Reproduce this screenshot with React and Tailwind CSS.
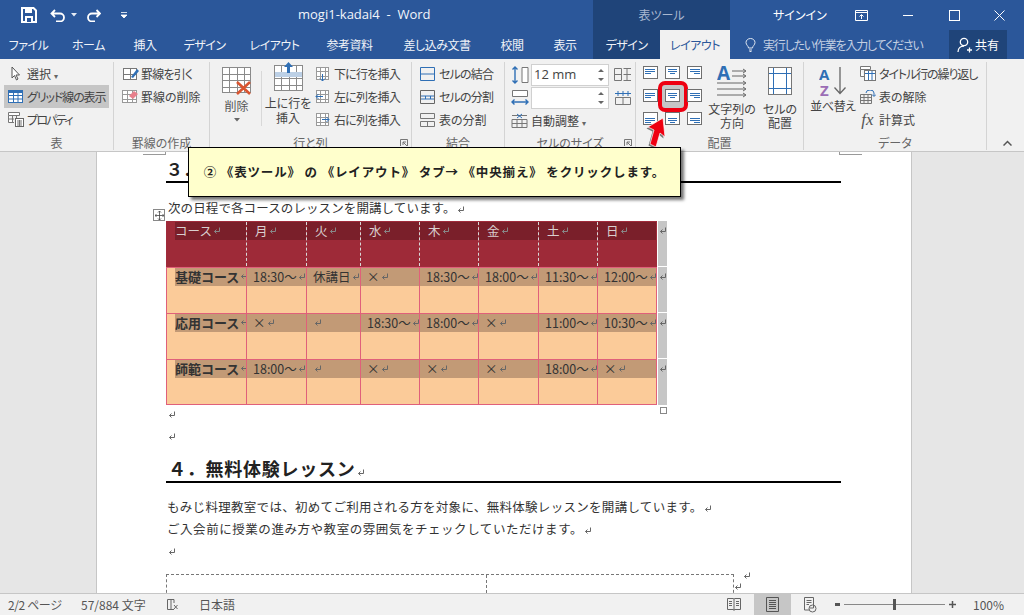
import React from "react";

const Ret = ({ c = "#666" }) => (
  <svg width="8" height="8" viewBox="0 0 8 8" className="inline-block shrink-0 align-[-1px] ml-px">
    <path d="M6.5 0.5V4.5H1.5M3.5 2.5L1.5 4.5L3.5 6.5" fill="none" stroke={c} strokeWidth="1" />
  </svg>
);

const Grid = ({ w = 16, h = 14, cols = 3, rows = 3, stroke = "#777", fill = "#fff", children }) => {
  const l = [];
  for (let i = 1; i < cols; i++) {
    const x = Math.round((w * i) / cols) + 0.5;
    l.push(<path key={"c" + i} d={`M${x} 0.5V${h - 0.5}`} stroke={stroke} />);
  }
  for (let i = 1; i < rows; i++) {
    const y = Math.round((h * i) / rows) + 0.5;
    l.push(<path key={"r" + i} d={`M0.5 ${y}H${w - 0.5}`} stroke={stroke} />);
  }
  return (
    <svg width={w} height={h} viewBox={`0 0 ${w} ${h}`} className="shrink-0 overflow-visible">
      <rect x="0.5" y="0.5" width={w - 1} height={h - 1} fill={fill} stroke={stroke} />
      {l}
      {children}
    </svg>
  );
};

const Row = ({ icon, text, active, x = "" }) => (
  <div className={`flex h-[23px] items-center gap-[3px] pl-[3px] whitespace-nowrap ${active ? "bg-[#c6c6c6]" : ""} ${x}`}>
    <span className="flex w-[17px] justify-center">{icon}</span>
    <span>{text}</span>
  </div>
);

const Group = ({ w, label, children, launcher, noBorder }) => (
  <div className={`relative flex h-full shrink-0 flex-col ${noBorder ? "" : "border-r border-[#d4d4d4]"}`} style={{ width: w }}>
    <div className="flex min-h-0 flex-1">{children}</div>
    <div className="h-[15px] text-center text-[12px] leading-[15px] text-[#666]">{label}</div>
    {launcher && (
      <svg width="8" height="8" viewBox="0 0 8 8" className="absolute bottom-[3px] right-[3px]">
        <path d="M0.5 7V0.5H7.5V7M7 7L3 3M3 6V3H6" fill="none" stroke="#777" />
      </svg>
    )}
  </div>
);

const Align = ({ h, v }) => {
  const ys = v === "t" ? [3, 5, 7] : v === "c" ? [4, 6, 8] : [6, 8, 10];
  const ln = h === "l" ? [[2, 12], [2, 12], [2, 8]] : h === "c" ? [[3, 12], [3, 12], [5, 10]] : [[3, 13], [3, 13], [7, 13]];
  return (
    <svg width="15" height="13" viewBox="0 0 15 13">
      <rect x="0.5" y="0.5" width="14" height="12" fill="#fff" stroke="#6f6f6f" />
      {ys.map((y, i) => (
        <path key={i} d={`M${ln[i][0]} ${y + 0.5}H${ln[i][1]}`} stroke="#2f6fb5" />
      ))}
    </svg>
  );
};

const AlignCell = ({ h, v, hot }) => (
  <div className="relative flex h-[23px] w-[22px] items-center justify-center">
    {hot && <div className="absolute left-[-3px] top-[-3px] h-[31px] w-[30px] rounded-[7px] border-[4px] border-[#ee0011] bg-[#c6c6c6]" />}
    <span className="relative flex"><Align h={h} v={v} /></span>
  </div>
);

const MmInput = ({ value }) => (
  <div className="flex h-[22px] w-[78px] items-center justify-between border border-[#d0d0d0] bg-white pl-[2px] pr-1 text-[13px] leading-none text-[#444]">
    <span className="font-['Open_Sans',sans-serif]">{value}</span>
    <svg width="6" height="16" viewBox="0 0 6 16"><path d="M0 5L3 2L6 5ZM0 11L3 14L6 11Z" fill="#666" /></svg>
  </div>
);

const cols = [80, 60, 54, 59, 59, 60, 59, 60];
const header = ["コース", "月", "火", "水", "木", "金", "土", "日"];
const rows = [
  ["基礎コース", "18:30～", "休講日", "×", "18:30～", "18:00～", "11:30～", "12:00～"],
  ["応用コース", "×", "", "18:30～", "18:00～", "×", "11:00～", "10:30～"],
  ["師範コース", "18:00～", "", "×", "×", "×", "18:00～", "×"],
];

const Tab = ({ children, x = "" }) => (
  <div className={`flex h-full items-center justify-center whitespace-nowrap text-[12px] tracking-[-0.5px] ${x}`}>{children}</div>
);

const RowEnd = ({ last }) => (
  <div className={`ml-px flex h-full w-[9px] items-start justify-center bg-[#c6c6c6] pt-[6px] ${last ? "" : "border-b border-white"}`}>
    <Ret />
  </div>
);

export default function App() {
  return (
    <div className="relative flex h-[615px] w-[1024px] flex-col overflow-hidden bg-[#e6e6e6] font-['Noto_Sans_CJK_JP','Noto_Sans',sans-serif] text-[12px] text-[#444]">
      {/* title bar */}
      <div className="relative flex h-[30px] shrink-0 items-center bg-[#2b579a] text-white [font-feature-settings:'palt']">
        <svg width="16" height="16" viewBox="0 0 16 16" className="ml-[21px]">
          <path d="M1 1H12.5L15 3.5V15H1Z" fill="none" stroke="#fff" strokeWidth="2" />
          <path d="M4 1.5H11V6H4ZM4 9H12V15H4Z" fill="#fff" />
          <path d="M6 11H10V15H6Z" fill="#2b579a" />
        </svg>
        <svg width="16" height="13" viewBox="0 0 16 13" className="ml-[13px]">
          <path d="M5 1L1.5 4.5L5 8M2 4.5H10A4 4 0 0 1 10 12.5H6" fill="none" stroke="#fff" strokeWidth="1.8" />
        </svg>
        <svg width="6" height="4" viewBox="0 0 6 4" className="ml-[5px]"><path d="M0 0H6L3 3.5Z" fill="#e6ecf5" /></svg>
        <svg width="15" height="13" viewBox="0 0 15 13" className="ml-[9px]">
          <path d="M10.5 1L14 4.5L10.5 8M13.5 4.5H6A4 4 0 0 0 6 12.5H9" fill="none" stroke="#fff" strokeWidth="1.8" />
        </svg>
        <svg width="6" height="6" viewBox="0 0 6 6" className="ml-[20px]"><path d="M0 0.5H6M0 3H6L3 6Z" stroke="#fff" strokeWidth="0.8" fill="#fff" /></svg>
        <div className="ml-[171px] w-[145px] whitespace-pre text-[13px] font-['Open_Sans',sans-serif] text-[#f2f5fa]">mogi1-kadai4  -  Word</div>
        <div className="ml-[150px] flex h-full w-[137px] items-center justify-center bg-[#1f4479] text-[12px] text-[#a9b8d0]">表ツール</div>
        <div className="ml-[43px] w-[47px] whitespace-nowrap text-[12px]">サインイン</div>
        <svg width="13" height="11" viewBox="0 0 13 11" className="ml-[35px]"><path d="M0.5 0.5H12.5V10.5H0.5ZM0.5 2.5H12.5M6.5 9V5M4.5 6.5L6.5 4.5L8.5 6.5" fill="none" stroke="#fff" /></svg>
        <div className="ml-[35px] h-px w-[10px] bg-white" />
        <div className="ml-[36px] h-[11px] w-[11px] border border-white" />
        <svg width="11" height="11" viewBox="0 0 11 11" className="ml-[34px]"><path d="M0.5 0.5L10.5 10.5M10.5 0.5L0.5 10.5" stroke="#fff" /></svg>
      </div>

      {/* tabs */}
      <div className="flex h-[29px] shrink-0 items-stretch bg-[#2b579a] text-[#f0f3f8] [font-feature-settings:'palt']">
        <Tab x="ml-[11px] w-[35px]">ファイル</Tab>
        <Tab x="ml-[27px] w-[31px]">ホーム</Tab>
        <Tab x="ml-[29px] w-[24px]">挿入</Tab>
        <Tab x="ml-[28px] w-[39px]">デザイン</Tab>
        <Tab x="ml-[28px] w-[45px]">レイアウト</Tab>
        <Tab x="ml-[28px] w-[49px]">参考資料</Tab>
        <Tab x="ml-[29px] w-[68px]">差し込み文書</Tab>
        <Tab x="ml-[29px] w-[24px]">校閲</Tab>
        <Tab x="ml-[29px] w-[24px]">表示</Tab>
        <Tab x="ml-[16px] w-[67px] bg-[#1f4479]">デザイン</Tab>
        <Tab x="w-[70px] bg-[#f1f1f1] text-[#2b579a]">レイアウト</Tab>
        <div className="ml-[15px] flex w-[204px] items-center gap-[7px] text-[#c3cfe2]">
          <svg width="11" height="14" viewBox="0 0 11 14" className="shrink-0"><path d="M3.5 10C3.5 8 1 7 1 4.5A4.5 4 0 0 1 10 4.5C10 7 7.5 8 7.5 10ZM4 12H7M4.5 13.5H6.5" fill="none" stroke="#dfe6f1" /></svg>
          <span className="whitespace-nowrap text-[12px] tracking-[-1.2px]">実行したい作業を入力してください</span>
        </div>
        <div className="flex w-[58px] items-center justify-center gap-[2px] bg-[#1f4479] text-white">
          <svg width="16" height="16" viewBox="0 0 16 16"><circle cx="7" cy="5" r="3.7" fill="none" stroke="#fff" strokeWidth="1.3" /><path d="M1 15C1 11 4 9 7 9M10 13H15M12.5 10.5V15.5" fill="none" stroke="#fff" strokeWidth="1.3" /></svg>
          <span>共有</span>
        </div>
      </div>

      {/* ribbon */}
      <div className="relative z-10 flex h-[93px] shrink-0 border-b border-[#c6c6c6] bg-[#f1f1f1] pt-[3px] pb-[1px] text-[12px] text-[#444] [font-feature-settings:'palt']">
        <Group w={114} label="表">
          <div className="w-full px-1">
            <Row icon={<svg width="10" height="15" viewBox="0 0 10 15"><path d="M1 1V12L3.5 9.5L5.5 14L7 13L5 9H8.5Z" fill="#fff" stroke="#555" /></svg>} text={<span>選択 <span className="text-[8px] text-[#666]">▾</span></span>} />
            <Row active icon={<svg width="15" height="13" viewBox="0 0 15 13"><rect x="0.5" y="0.5" width="14" height="12" fill="#fff" stroke="#2f6fb5" /><rect x="1" y="1" width="13" height="2" fill="#2f6fb5" /><path d="M5.5 1V12M10 1V12M1 5.5H14M1 9H14" stroke="#2f6fb5" /></svg>} text={<span className="tracking-[-1.1px]">グリッド線の表示</span>} />
            <Row icon={<svg width="16" height="15" viewBox="0 0 16 15"><path d="M0.5 0.5H11.5V3.5H0.5ZM0.5 3.5V10.5H6M4.5 3.5V10.5M0.5 7H6M8.5 3.5V6" fill="#fff" stroke="#777" /><rect x="7.5" y="6.5" width="8" height="8" fill="#fff" stroke="#666" /><path d="M9 9H14M9 11H14M9 13H14M11.5 8V14" stroke="#777" /></svg>} text={<span className="tracking-[-1.7px]">プロパティ</span>} />
          </div>
        </Group>
        <Group w={96} label="罫線の作成">
          <div className="w-full pl-1">
            <Row icon={<Grid w={14} h={12} cols={2} rows={2} stroke="#777"><path d="M8 9L14 1L16 3L10 10Z" fill="#2f6fb5" /></Grid>} text={<span className="tracking-[-0.8px]">罫線を引く</span>} />
            <Row icon={<Grid w={15} h={13} cols={3} rows={3} stroke="#999"><path d="M7 6L12 1L16 4L11 9Z" fill="#e8808c" /></Grid>} text="罫線の削除" />
          </div>
        </Group>
        <Group w={202} label="行と列" launcher>
          <div className="flex w-[51px] flex-col items-center pt-[5px] pl-[2px]">
            <Grid w={29} h={26} cols={4} rows={4} stroke="#8a8a8a">
              <path d="M15 15L28 27M28 15L15 27" stroke="#d9542f" strokeWidth="2.6" />
            </Grid>
            <div className="mt-[6px] leading-[14px] text-[#555]">削除</div>
            <svg width="6" height="4" viewBox="0 0 6 4" className="mt-[5px]"><path d="M0 0H6L3 3.5Z" fill="#666" /></svg>
          </div>
          <div className="my-[9px] w-px bg-[#d8d8d8]" />
          <div className="ml-px flex w-[50px] flex-col items-center pt-[3px]">
            <Grid w={29} h={26} cols={4} rows={4} stroke="#8a8a8a" fill="#fff">
              <rect x="1" y="7" width="27" height="5" fill="#bcd0e6" />
              <path d="M14.5 -3L10 2H13V8H16V2H19Z" fill="#2f6fb5" />
            </Grid>
            <div className="mt-[4px] whitespace-nowrap text-center leading-[15px]">上に行を<br />挿入</div>
          </div>
          <div className="ml-[-2px] tracking-[-0.8px]">
            <Row icon={<Grid w={13} h={13} cols={3} rows={3} stroke="#9a9a9a"><path d="M6.5 7V14M4 11.5L6.5 14L9 11.5" stroke="#2f6fb5" fill="none" /></Grid>} text="下に行を挿入" />
            <Row icon={<Grid w={13} h={13} cols={3} rows={3} stroke="#9a9a9a"><path d="M0 6.5H7M2.5 4L0 6.5L2.5 9" stroke="#2f6fb5" fill="none" /></Grid>} text="左に列を挿入" />
            <Row icon={<Grid w={13} h={13} cols={3} rows={3} stroke="#9a9a9a"><path d="M6 6.5H13M10.5 4L13 6.5L10.5 9" stroke="#2f6fb5" fill="none" /></Grid>} text="右に列を挿入" />
          </div>
        </Group>
        <Group w={93} label="結合">
          <div className="w-full pl-[4px]">
            <Row icon={<svg width="15" height="14" viewBox="0 0 15 14"><path d="M0.5 0.5H14.5V13.5H0.5ZM0.5 7H14.5" fill="none" stroke="#2f6fb5" /></svg>} text={<span className="tracking-[-0.8px]">セルの結合</span>} />
            <Row icon={<svg width="15" height="14" viewBox="0 0 15 14"><path d="M0.5 0.5H14.5V13.5H0.5Z" fill="none" stroke="#666" /><path d="M1 6H14M1 9H14M5.5 6V9M10.5 6V9" stroke="#2f6fb5" /></svg>} text={<span className="tracking-[-0.8px]">セルの分割</span>} />
            <Row icon={<svg width="15" height="14" viewBox="0 0 15 14"><path d="M0.5 0.5H14.5V5.5H0.5ZM0.5 8.5H14.5V13.5H0.5ZM7.5 8.5V13.5" fill="none" stroke="#777" /></svg>} text="表の分割" />
          </div>
        </Group>
        <Group w={131} label="セルのサイズ" launcher>
          <div className="flex w-full flex-col pl-[6px] pt-px">
            <div className="flex h-[23px] items-center gap-[2px]">
              <svg width="18" height="18" viewBox="0 0 18 18"><path d="M11 1.5H17V16.5H11Z" fill="#fff" stroke="#777" /><path d="M4 1V17M1.5 3.5L4 1L6.5 3.5M1.5 14.5L4 17L6.5 14.5" fill="none" stroke="#2f6fb5" strokeWidth="1.4" /></svg>
              <MmInput value="12 mm" />
              <span className="ml-[3px] flex"><svg width="18" height="15" viewBox="0 0 18 15"><path d="M0.5 1.5H7.5V13.5H0.5ZM0.5 7.5H7.5M9.5 1.5H17M9.5 13.5H17M13 1V14M9.5 7.5H17" fill="none" stroke="#777" /></svg></span>
            </div>
            <div className="flex h-[23px] items-center gap-[2px]">
              <svg width="18" height="18" viewBox="0 0 18 18"><path d="M1.5 1.5H16.5V7.5H1.5Z" fill="#fff" stroke="#777" /><path d="M1 13H17M3.5 10.5L1 13L3.5 15.5M14.5 10.5L17 13L14.5 15.5" fill="none" stroke="#2f6fb5" strokeWidth="1.4" /></svg>
              <MmInput value="" />
              <span className="ml-[3px] flex"><svg width="18" height="15" viewBox="0 0 18 15"><path d="M1 3.5H17M4 1V6M9 1V6M14 1V6" stroke="#2f6fb5" fill="none" /><path d="M1.5 7.5H16.5V14.5H1.5ZM9 7.5V14.5" fill="none" stroke="#777" /></svg></span>
            </div>
            <div className="flex h-[23px] items-center gap-[3px]">
              <svg width="17" height="15" viewBox="0 0 17 15"><path d="M1 2.5H16M1 6.5H16V14.5H1ZM1 10.5H16M6 6.5V14.5M11 6.5V14.5" fill="none" stroke="#777" /><path d="M6 1L11 5M11 1L6 5" stroke="#2f6fb5" /></svg>
              <span className="whitespace-nowrap">自動調整 <span className="text-[8px] text-[#666]">▾</span></span>
            </div>
          </div>
        </Group>
        <Group w={168} label="配置">
          <div className="flex w-full pt-[1px]">
            <div className="ml-[3px] mt-[-2px] grid h-[69px] grid-cols-3">
              <AlignCell h="l" v="t" /><AlignCell h="c" v="t" /><AlignCell h="r" v="t" />
              <AlignCell h="l" v="c" /><AlignCell h="c" v="c" hot /><AlignCell h="r" v="c" />
              <AlignCell h="l" v="b" /><AlignCell h="c" v="b" /><AlignCell h="r" v="b" />
            </div>
            <div className="ml-[3px] flex w-[48px] flex-col items-center">
              <svg width="31" height="36" viewBox="0 0 31 36" className="mt-[2px]">
                <text x="0" y="15" fontSize="19" fontWeight="700" fill="#2f6fb5" fontFamily="'Open Sans',sans-serif">A</text>
                <path d="M15 6H28M15 11H28M0 18H28M0 24H28M0 30H28M26 4L29 6L26 8M26 9L29 11L26 13M26 16L29 18L26 20M26 22L29 24L26 26M26 28L29 30L26 32" fill="none" stroke="#666" />
              </svg>
              <div className="mt-[1px] whitespace-nowrap text-center leading-[14px]">文字列の<br />方向</div>
            </div>
            <div className="ml-[2px] flex w-[44px] flex-col items-center">
              <svg width="24" height="28" viewBox="0 0 24 28" className="mt-[4px]">
                <rect x="0.5" y="0.5" width="23" height="27" fill="#fff" stroke="#777" />
                <path d="M5.5 1V27M18.5 1V27M1 6.5H23M1 21.5H23" stroke="#2f6fb5" />
              </svg>
              <div className="mt-[7px] whitespace-nowrap text-center leading-[14px]">セルの<br />配置</div>
            </div>
          </div>
        </Group>
        <Group w={183} label="データ">
          <div className="flex w-full">
            <div className="ml-[6px] flex w-[46px] flex-col items-center pt-[4px]">
              <svg width="28" height="32" viewBox="0 0 28 32">
                <text x="0" y="14" fontSize="15" fontWeight="700" fill="#2f6fb5" fontFamily="'Open Sans',sans-serif">A</text>
                <text x="1" y="30" fontSize="15" fontWeight="700" fill="#9b6db5" fontFamily="'Open Sans',sans-serif">Z</text>
                <path d="M21 1V27M15.5 21.5L21 27.5L26.5 21.5" fill="none" stroke="#666" strokeWidth="1.3" />
              </svg>
              <div className="mt-[1px] whitespace-nowrap leading-[14px] tracking-[-0.4px]">並べ替え</div>
            </div>
            <div>
              <Row icon={<svg width="16" height="15" viewBox="0 0 16 15"><path d="M0.5 0.5H10.5V3.5H0.5ZM0.5 3.5V10.5H4" fill="#fff" stroke="#777" /><rect x="4.5" y="4.5" width="11" height="10" fill="#fff" stroke="#777" /><path d="M5 7.5H15M8.5 5V14M12 5V14" stroke="#2f6fb5" /></svg>} text={<span className="tracking-[-1.1px]">タイトル行の繰り返し</span>} />
              <Row icon={<svg width="16" height="14" viewBox="0 0 16 14"><path d="M0.5 4.5H11.5V13.5H0.5ZM0.5 7.5H11.5M0.5 10.5H11.5M4 4.5V13.5M8 4.5V13.5" fill="none" stroke="#777" /><path d="M6 3A4 3 0 0 1 14 3V6M12 4.5L14 6.5L16 4.5" fill="none" stroke="#2f6fb5" /></svg>} text="表の解除" />
              <Row icon={<span className="font-['Liberation_Serif',serif] text-[17px] italic leading-none text-[#555]">fx</span>} text="計算式" />
            </div>
          </div>
        </Group>
        <svg width="9" height="6" viewBox="0 0 9 6" className="absolute bottom-[5px] right-[12px]"><path d="M0.5 5.5L4.5 1.5L8.5 5.5" fill="none" stroke="#555" strokeWidth="1.5" /></svg>
        {/* red arrow pointing at the button */}
        <svg width="24" height="33" viewBox="0 0 24 33" className="absolute left-[644px] top-[57px] z-20">
          <path d="M19 2L21 21L16 17L12 31L6 28L10 14L4 11Z" fill="#000" opacity="0.5" transform="translate(-1.5 1.5)" />
          <path d="M19 2L21 21L16 17L12 31L6 28L10 14L4 11Z" fill="#ee0011" stroke="#fff" strokeWidth="0.7" />
        </svg>
      </div>

      {/* document */}
      <div className="relative flex min-h-0 flex-1 overflow-hidden">
        <div className="relative ml-[96px] h-full w-[816px] border-x border-[#c6c6c6] bg-white pl-[69px] text-[12.5px] text-[#333]">
          <div className="absolute left-[46px] top-0 h-[3px] w-[23px] border-b border-r border-[#999]" />
          <div className="absolute right-[49px] top-0 h-[3px] w-[23px] border-b border-l border-[#999]" />
          <div className="w-[675px]">
            <div className="flex h-[31px] items-end border-b-2 border-black pb-[1px] text-[17px] font-bold leading-[22px] text-[#222]">３．コース日程</div>
            <div className="relative flex h-[38px] items-end pb-[6px] pl-[2px] leading-[14px] tracking-[0.1px]">
              <div className="absolute left-[-13px] top-[26px] flex h-[12px] w-[12px] items-center justify-center border border-[#888] bg-white">
                <svg width="9" height="9" viewBox="0 0 9 9"><path d="M4.5 0V9M0 4.5H9M3 1.5L4.5 0L6 1.5M3 7.5L4.5 9L6 7.5M1.5 3L0 4.5L1.5 6M7.5 3L9 4.5L7.5 6" fill="none" stroke="#444" strokeWidth="0.8" /></svg>
              </div>
              <span className="whitespace-nowrap">次の日程で各コースのレッスンを開講しています。<Ret /></span>
            </div>

            {/* table */}
            <div className="relative w-[501px]">
              <div className="flex h-[46px]">
                <div className="flex h-full w-[491px] border border-[#a02b3b] bg-[#9e2a38]">
                  {header.map((t, i) => (
                    <div key={i} className={`h-full ${i ? "border-l border-dashed border-[#d8d8d8]" : "pl-2"}`} style={{ width: cols[i] - (i === 0 ? 1 : i === 7 ? 1 : 0) }}>
                      <div className={`flex h-[18px] items-center whitespace-nowrap bg-[#7a1f2a] text-[12.5px] leading-none text-[#d9cfcf] ${i ? "pl-[8px]" : ""}`}>
                        {t}<Ret c="#888" />
                      </div>
                    </div>
                  ))}
                </div>
                <RowEnd />
              </div>
              {rows.map((r, ri) => (
                <div key={ri} className="flex h-[46px]">
                  <div className={`flex h-full w-[491px] border-x border-t border-[#e0607a] bg-[#fbcb99] ${ri === 2 ? "border-b" : ""}`}>
                    {r.map((t, i) => (
                      <div key={i} className={`h-full ${i ? "border-l border-[#e0607a]" : "pl-2"}`} style={{ width: cols[i] - (i === 0 ? 1 : i === 7 ? 1 : 0) }}>
                        <div className={`flex h-[18px] items-center overflow-hidden whitespace-nowrap bg-[#c29a76] leading-none text-[#333] ${i ? "pl-[6px]" : "pb-[2px] text-[13px] font-bold"}`}>
                          {t}<Ret />
                        </div>
                      </div>
                    ))}
                  </div>
                  <RowEnd last={ri === 2} />
                </div>
              ))}
              <div className="absolute right-0 top-[186px] h-[7px] w-[7px] border border-[#888] bg-white" />
            </div>

            <div className="flex h-[14px] items-end pl-px"><Ret /></div>
            <div className="flex h-[22px] items-end pl-px"><Ret /></div>
            <div className="flex h-[42px] items-end border-b-2 border-black pb-[2px] pl-[2px] text-[18px] font-bold leading-[22px] tracking-[0.75px] text-[#222]">
              <span className="whitespace-nowrap">４．無料体験レッスン<Ret /></span>
            </div>
            <div className="flex h-[33px] items-end pl-px leading-[18px] tracking-[0.3px]"><span className="whitespace-nowrap">もみじ料理教室では、初めてご利用される方を対象に、無料体験レッスンを開講しています。<Ret /></span></div>
            <div className="flex h-[22px] items-end pl-px leading-[18px] tracking-[0.55px]"><span className="whitespace-nowrap">ご入会前に授業の進み方や教室の雰囲気をチェックしていただけます。<Ret /></span></div>
            <div className="flex h-[18px] items-end pl-px"><Ret /></div>
            <div className="relative mt-[18px] flex h-[40px] w-[568px] border border-dashed border-[#777]">
              <div className="w-[320px] border-r border-dashed border-[#777]" />
              <div className="absolute left-[575px] top-[-10px]"><Ret /></div>
              <div className="absolute left-[566px] top-[1px]"><Ret /></div>
            </div>
          </div>
        </div>
      </div>

      {/* status bar */}
      <div className="flex h-[22px] shrink-0 items-center border-t border-[#c6c6c6] bg-[#f1f1f1] pl-[8px] text-[12px] text-[#555] [font-feature-settings:'palt']">
        <span className="w-[73px] whitespace-nowrap tracking-[-0.4px]">2/2 ページ</span>
        <span className="w-[86px] whitespace-nowrap">57/884 文字</span>
        <span className="w-[32px]"><svg width="11" height="14" viewBox="0 0 11 14"><path d="M0.5 1.5H4V11.5H0.5ZM4 1.5H7V5M4 11.5H7M7 7L10.5 11M10.5 7L7 11" fill="none" stroke="#666" /></svg></span>
        <span>日本語</span>
        <svg width="14" height="15" viewBox="0 0 14 15" className="ml-auto"><path d="M0.5 1.5H6.5L7 2.5L7.5 1.5H13.5V12.5H7.5L7 13.5L6.5 12.5H0.5ZM7 2.5V13M2 4.5H5M2 6.5H5M2 8.5H5M9 4.5H12M9 6.5H12M9 8.5H12" fill="none" stroke="#666" /></svg>
        <div className="ml-[13px] flex h-full w-[37px] items-center justify-center bg-[#c6c6c6]">
          <svg width="13" height="15" viewBox="0 0 13 15"><path d="M0.5 0.5H12.5V14.5H0.5ZM3 3.5H10M3 5.5H10M3 7.5H10M3 9.5H10M3 11.5H10" fill="none" stroke="#555" /></svg>
        </div>
        <svg width="13" height="16" viewBox="0 0 13 16" className="ml-[13px]"><path d="M0.5 0.5H9.5V11H5.5M0.5 0.5V13H5M2.5 3.5H7.5M2.5 5.5H7.5M2.5 7.5H5" fill="none" stroke="#666" /><circle cx="8.5" cy="11.5" r="3.5" fill="none" stroke="#666" /></svg>
        <div className="ml-[18px] h-[3px] w-[5px] bg-[#555]" />
        <div className="relative ml-[4px] h-px w-[101px] bg-[#888]">
          <div className="absolute left-[49px] top-[-5px] h-[11px] w-[3px] bg-[#555]" />
        </div>
        <svg width="7" height="7" viewBox="0 0 7 7" className="ml-[4px]"><path d="M3.5 0V7M0 3.5H7" stroke="#555" strokeWidth="1.5" /></svg>
        <span className="ml-[17px] mr-[19px] w-[32px] whitespace-nowrap">100%</span>
      </div>

      {/* callout lying over the ribbon and the page */}
      <div className="absolute left-[188px] top-[147px] z-30 flex h-[50px] w-[493px] items-center justify-center whitespace-nowrap border border-black bg-[#ffffcc] text-[12.5px] font-bold tracking-[0.85px] text-[#222] shadow-[3px_3px_3px_rgba(0,0,0,0.55)]">
        ② 《表ツール》 の 《レイアウト》 タブ→ 《中央揃え》 をクリックします。
      </div>
    </div>
  );
}
